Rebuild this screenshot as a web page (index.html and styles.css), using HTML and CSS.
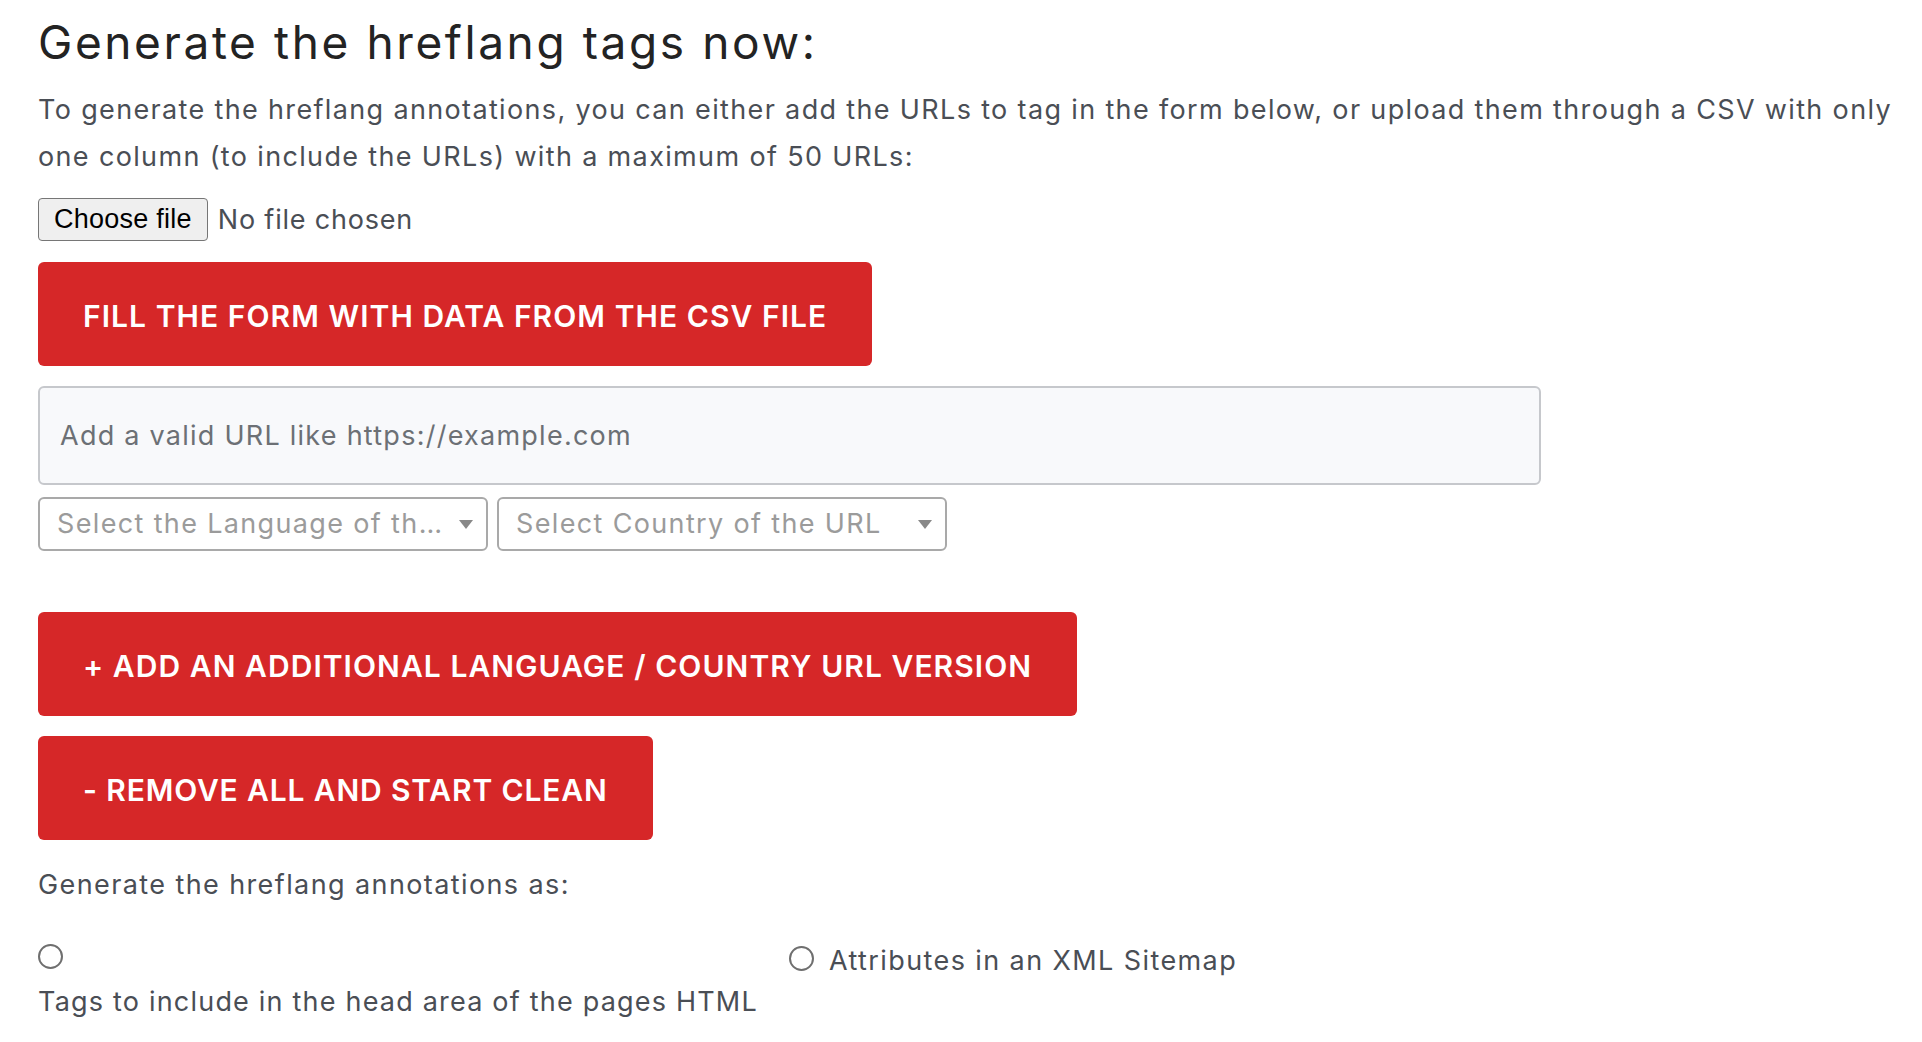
FILE: index.html
```html
<!DOCTYPE html>
<html lang="en">
<head>
<meta charset="utf-8">
<title>Hreflang tags generator</title>
<link rel="stylesheet" href="styles.css">
</head>
<body>
<main class="page">
  <h1 class="title">Generate the hreflang tags now:</h1>
  <p class="intro">To generate the hreflang annotations, you can either add the URLs to tag in the form below, or upload them through a CSV with only one column (to include the URLs) with a maximum of 50 URLs:</p>
  <div class="file-row">
    <label class="file-btn">Choose file<input type="file" class="file-input" accept=".csv"></label>
    <span class="file-name">No file chosen</span>
  </div>
  <button class="btn" type="button">Fill the form with data from the CSV file</button>
  <input class="url-input" type="text" placeholder="Add a valid URL like https://example.com">
  <div class="select-row">
    <div class="select"><span class="select-text">Select the Language of the URL</span><svg class="caret" viewBox="0 0 14 9" width="14" height="9"><path d="M0 0h14L7 9z"/></svg></div>
    <div class="select"><span class="select-text">Select Country of the URL</span><svg class="caret" viewBox="0 0 14 9" width="14" height="9"><path d="M0 0h14L7 9z"/></svg></div>
  </div>
  <button class="btn btn-add" type="button">+ Add an additional language / country URL version</button>
  <button class="btn btn-remove" type="button">- Remove all and start clean</button>
  <p class="format-label">Generate the hreflang annotations as:</p>
  <div class="format-options">
    <label class="option option-stacked"><input type="radio" name="format" class="radio"><span>Tags to include in the head area of the pages HTML</span></label>
    <label class="option"><input type="radio" name="format" class="radio"><span>Attributes in an XML Sitemap</span></label>
  </div>
</main>
</body>
</html>
```

FILE: styles.css
```css
* { box-sizing: border-box; }
html, body { margin: 0; padding: 0; background: #ffffff; }
body {
  font-family: Inter, "Liberation Sans", sans-serif;
  color: #4a4e55;
  letter-spacing: 1.35px;
}

.page {
  display: flex;
  flex-direction: column;
  align-items: flex-start;
  padding: 15px 0 0 38px;
}

.title {
  margin: 0;
  font-size: 46px;
  line-height: 54px;
  font-weight: 400;
  letter-spacing: 2.6px;
  color: #232323;
  white-space: nowrap;
}

.intro {
  margin: 17px 0 0;
  width: 1870px;
  font-size: 27px;
  line-height: 47px;
}

.file-row {
  margin-top: 18px;
  display: flex;
  align-items: center;
  height: 43px;
}
.file-btn {
  height: 43px;
  padding: 0 15px;
  border: 1px solid #767676;
  border-radius: 4px;
  background: #efefef;
  color: #000;
  font-family: "Liberation Sans", Arial, sans-serif;
  font-size: 27px;
  line-height: 41px;
  letter-spacing: 0.25px;
  white-space: nowrap;
}
.file-input { display: none; }
.file-name {
  margin-left: 10px;
  font-size: 27px;
  line-height: 43px;
  letter-spacing: 0.8px;
  white-space: nowrap;
}

.btn {
  margin-top: 21px;
  padding: 36px 45px 32px;
  border: none;
  border-radius: 6px;
  background: #d62728;
  color: #ffffff;
  font-family: Inter, "Liberation Sans", sans-serif;
  font-size: 30px;
  line-height: 36px;
  font-weight: 600;
  letter-spacing: 1.05px;
  text-transform: uppercase;
  white-space: nowrap;
  cursor: pointer;
}
.btn-add { margin-top: 61px; }
.btn-remove { margin-top: 20px; letter-spacing: 0.85px; }

.url-input {
  margin-top: 20px;
  width: 1503px;
  height: 99px;
  padding: 0 20px;
  border: 2px solid #c6c8cc;
  border-radius: 6px;
  background: #f8f9fb;
  font-family: Inter, "Liberation Sans", sans-serif;
  font-size: 27px;
  letter-spacing: 1.25px;
  color: #4a4e55;
}
.url-input::placeholder { color: #6c7075; }

.select-row {
  margin-top: 12px;
  display: flex;
  gap: 9px;
}
.select {
  width: 450px;
  height: 54px;
  display: flex;
  align-items: center;
  padding: 0 13px 0 17px;
  border: 2px solid #a9a9a9;
  border-radius: 6px;
  background: #fff;
}
.select-text {
  flex: 1;
  min-width: 0;
  padding-right: 10px;
  overflow: hidden;
  text-overflow: ellipsis;
  white-space: nowrap;
  font-size: 27px;
  line-height: 50px;
  color: #9b9b9b;
}
.caret { fill: #888888; flex: none; }

.format-label {
  margin: 21px 0 0;
  font-size: 27px;
  line-height: 47px;
  letter-spacing: 1.4px;
}

.format-options {
  margin-top: 29px;
  display: grid;
  grid-template-columns: 751px 751px;
  font-size: 27px;
  line-height: 47px;
  letter-spacing: 1.4px;
}
.option {
  display: flex;
  align-items: flex-start;
  gap: 15px;
  white-space: nowrap;
}
.option-stacked {
  flex-direction: column;
  gap: 9px;
  letter-spacing: 1.2px;
}
.radio {
  appearance: none;
  -webkit-appearance: none;
  margin: 9px 0 0;
  width: 25px;
  height: 25px;
  border: 2px solid #6f6f6f;
  border-radius: 50%;
  background: #fff;
  flex: none;
}
.option-stacked .radio { margin-top: 7px; }
```
